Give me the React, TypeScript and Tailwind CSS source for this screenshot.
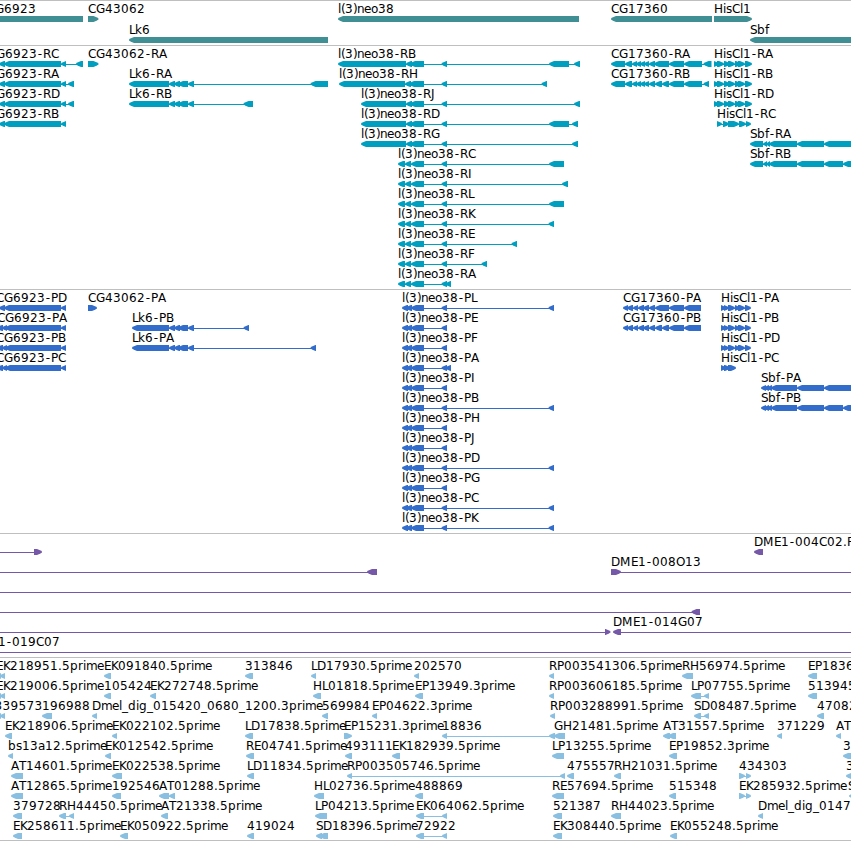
type Span = [number, number];

interface Feature {
  row: number;
  label?: string;
  // label origin, defaults to the left edge of the first block
  x?: number;
  strand?: "+" | "-";
  blocks: Span[];
  // connector line, defaults to the full extent of the blocks
  line?: Span;
}

interface Track {
  name: string;
  pitch?: number;
  heightClass: string;
  colorClass: string;
  features: Feature[];
}

// Pixel advance of each glyph in the label font
const ADVANCE: Record<string, number> = {
  A: 8, C: 8, D: 9, E: 7, F: 7, G: 9, H: 9, I: 4, J: 4, K: 7, L: 6, M: 11,
  O: 9, P: 7, R: 8, S: 7, T: 7, a: 7, b: 8, d: 8, e: 7, f: 4, g: 8, i: 3,
  k: 7, l: 3, m: 11, n: 7, o: 7, p: 8, r: 5, s: 6, "(": 4, ")": 4, ".": 4,
  "-": 6, _: 6,
};

const f = (
  row: number,
  label: string,
  blocks: Span[],
  extra: Partial<Feature> = {},
): Feature => ({ row, label, blocks, ...extra });

const genes: Feature[] = [
  f(0, "CG6923", [[-10, 83]], { x: -13 }),
  f(0, "CG43062", [[88, 98.5]], { strand: "+" }),
  f(0, "l(3)neo38", [[338, 579]]),
  f(0, "CG17360", [[611, 712]]),
  f(0, "HisCl1", [[714, 752]], { strand: "+" }),
  f(1, "Lk6", [[129, 328]]),
  f(1, "Sbf", [[750, 860]]),
];

const cg6923: Span[] = [[-1, 5], [4, 61], [61, 66]];
const lk6Mid: Span[] = [[169, 175], [174, 180], [178, 188], [188, 194]];
const neoMid: Span[] = [[406, 412], [410, 424], [441.5, 447]];
const neoShort: Span[] = [[398, 405], [405, 411], [411, 424], [441.5, 447]];
const cg17360: Span[] = [
  [611, 625], [625, 632], [632, 637], [636, 641], [640, 645], [644, 649], [649, 655],
];
const hisA: Span[] = [[714, 719], [717, 724], [724, 730], [728, 735], [735, 741], [738, 745], [745, 752]];
const sbf: Span[] = [[750, 763], [763, 767], [766, 770], [769, 797], [797, 824]];

const transcripts: Feature[] = [
  f(0, "CG6923-RC", [...cg6923, [76, 83]], { x: -12 }),
  f(1, "CG6923-RA", [...cg6923, [68, 74]], { x: -12 }),
  f(2, "CG6923-RD", [...cg6923, [68, 74]], { x: -12 }),
  f(3, "CG6923-RB", cg6923, { x: -12 }),
  f(0, "CG43062-RA", [[88, 98.5]], { strand: "+" }),
  f(1, "Lk6-RA", [[129, 169], ...lk6Mid, [310.5, 328]]),
  f(2, "Lk6-RB", [[129, 169], ...lk6Mid, [243.5, 253]]),
  f(0, "l(3)neo38-RB", [[338, 406], ...neoMid, [549, 569], [574, 580]]),
  f(1, "l(3)neo38-RH", [[339, 405], [405, 411], [409, 424], [441.5, 447], [541.5, 547]]),
  f(2, "l(3)neo38-RJ", [[361, 406], ...neoMid, [574, 580]]),
  f(3, "l(3)neo38-RD", [[361, 406], ...neoMid, [549, 569], [572, 578]]),
  f(4, "l(3)neo38-RG", [[361, 406], ...neoMid, [572, 578]]),
  f(5, "l(3)neo38-RC", [...neoShort, [549, 564]]),
  f(6, "l(3)neo38-RI", [...neoShort, [562, 568]]),
  f(7, "l(3)neo38-RL", [...neoShort, [549, 564]]),
  f(8, "l(3)neo38-RK", [...neoShort, [548.5, 554]]),
  f(9, "l(3)neo38-RE", [...neoShort, [511.5, 517]]),
  f(10, "l(3)neo38-RF", [...neoShort, [481.5, 487]]),
  f(11, "l(3)neo38-RA", [...neoShort, [445.5, 451]]),
  f(0, "CG17360-RA", [...cg17360, [654, 669], [669, 684], [684, 702], [703.5, 711.5]]),
  f(1, "CG17360-RB", [...cg17360, [655, 662], [662, 669], [669, 684], [684, 702], [703.5, 709]]),
  f(0, "HisCl1-RA", hisA, { strand: "+" }),
  f(1, "HisCl1-RB", hisA, { strand: "+" }),
  f(2, "HisCl1-RD", hisA, { strand: "+" }),
  f(3, "HisCl1-RC", [[717, 722], [723, 729], [728, 739], [739, 746], [746, 751]], { strand: "+" }),
  f(4, "Sbf-RA", [...sbf, [824, 860]]),
  f(5, "Sbf-RB", [...sbf, [824, 843], [843, 860]]),
];

const cg6923P: Span[] = [[-3, 3], [2, 7], [5, 61], [61, 66]];
const neoP: Span[] = [[402, 408], [406, 412], [411, 424], [441.5, 447]];
const neoPLong: Span[] = [...neoP, [548.5, 554]];
const cg17360P: Span[] = [[623, 628], [627, 633], [633, 638], [638, 644], [643, 649], [649, 655]];
const hisP: Span[] = [[721, 726], [724, 729], [728, 735], [735, 740], [738, 745], [745, 751]];
const sbfP: Span[] = [[761, 766], [764, 769], [767, 772], [771, 797], [797, 824]];

const proteins: Feature[] = [
  f(0, "CG6923-PD", cg6923, { x: -4 }),
  f(1, "CG6923-PA", cg6923P, { x: -3 }),
  f(2, "CG6923-PB", cg6923P, { x: -4 }),
  f(3, "CG6923-PC", cg6923P, { x: -4 }),
  f(0, "CG43062-PA", [[88, 97]], { strand: "+" }),
  f(1, "Lk6-PB", [[132, 169], ...lk6Mid, [243.5, 249]]),
  f(2, "Lk6-PA", [[132, 169], ...lk6Mid, [310.5, 316]]),
  f(0, "l(3)neo38-PL", neoPLong),
  f(1, "l(3)neo38-PE", neoP),
  f(2, "l(3)neo38-PF", neoP),
  f(3, "l(3)neo38-PA", [...neoP, [445.5, 451]]),
  f(4, "l(3)neo38-PI", neoP),
  f(5, "l(3)neo38-PB", neoPLong),
  f(6, "l(3)neo38-PH", neoP),
  f(7, "l(3)neo38-PJ", neoP),
  f(8, "l(3)neo38-PD", neoPLong),
  f(9, "l(3)neo38-PG", neoP),
  f(10, "l(3)neo38-PC", neoPLong),
  f(11, "l(3)neo38-PK", neoPLong),
  f(0, "CG17360-PA", [...cg17360P, [655, 669], [669, 684], [684, 701]]),
  f(1, "CG17360-PB", [...cg17360P, [655, 662], [662, 669], [669, 684], [684, 701]]),
  f(0, "HisCl1-PA", hisP, { strand: "+" }),
  f(1, "HisCl1-PB", hisP, { strand: "+" }),
  f(2, "HisCl1-PD", hisP, { strand: "+" }),
  f(3, "HisCl1-PC", [[721, 726], [724, 730], [728, 736]], { strand: "+" }),
  f(4, "Sbf-PA", [...sbfP, [824, 860]]),
  f(5, "Sbf-PB", [...sbfP, [824, 843], [843, 860]]),
];

const clones: Feature[] = [
  { row: 0, strand: "+", blocks: [[34, 42]], line: [-10, 40] },
  f(0, "DME1-004C02.F", [[754, 763]]),
  { row: 1, blocks: [[367, 377]], line: [-10, 377] },
  f(1, "DME1-008O13", [[611, 621]], { strand: "+", line: [611, 860] }),
  { row: 2, blocks: [], line: [-10, 860] },
  { row: 3, blocks: [[691.5, 700]], line: [-10, 700] },
  { row: 4, strand: "+", blocks: [[605, 610.5]], line: [-10, 609] },
  f(4, "DME1-014G07", [[613, 621]], { line: [614, 860] }),
  f(5, "DME1-019C07", [], { x: -29, line: [-10, 860] }),
];

const ests: Feature[] = [
  f(0, "EK218951.5prime", [[-4, 1], [0, 5]]),
  f(0, "EK091840.5prime", [[104, 111]]),
  f(0, "313846", [[245, 253]]),
  f(0, "LD17930.5prime", [[311, 316]]),
  f(0, "202570", [[414, 419]]),
  f(0, "RP003541306.5prime", [[549, 554]]),
  f(0, "RH56974.5prime", [[682, 693]]),
  f(0, "EP1836", [[808, 817]]),
  f(1, "EK219006.5prime", [[-4, 1], [0, 5]]),
  f(1, "105424", [[104, 111]]),
  f(1, "EK272748.5prime", [[150, 156]]),
  f(1, "HL01818.5prime", [[313, 321]]),
  f(1, "EP13949.3prime", [[415, 423]]),
  f(1, "RP003606185.5prime", [[549, 554]]),
  f(1, "LP07755.5prime", [[691, 701], [704, 709]]),
  f(1, "513945", [[808, 817]]),
  f(2, "339573", [[-4, 1], [0, 5]], { x: -5.5 }),
  f(2, "196988", [[42, 52]]),
  f(2, "Dmel_dig_015420_0680_1200.3prime", [[92, 97]]),
  f(2, "569984", [[322, 328]]),
  f(2, "EP04622.3prime", [[372, 377]]),
  f(2, "RP003288991.5prime", [[550, 555]]),
  f(2, "SD08487.5prime", [[694, 701], [704, 709]]),
  f(2, "47082", [[817, 824]]),
  f(3, "EK218906.5prime", [[5, 12]]),
  f(3, "EK022102.5prime", [[112, 117]]),
  f(3, "LD17838.5prime", [[245, 253]]),
  f(3, "EP15231.3prime", [[344, 352]], { strand: "+" }),
  f(3, "18836", [[442, 447], [549, 555]]),
  f(3, "GH21481.5prime", [[554, 565]]),
  f(3, "AT31557.5prime", [[663, 670], [668, 676]]),
  f(3, "371229", [[777, 782]]),
  f(3, "AT", [[836, 841]]),
  f(4, "bs13a12.5prime", [[8, 13]]),
  f(4, "EK012542.5prime", [[105, 111]]),
  f(4, "RE04741.5prime", [[246, 254]]),
  f(4, "493111", [[345, 352]]),
  f(4, "EK182939.5prime", [[392, 400]]),
  f(4, "LP13255.5prime", [[552, 564]]),
  f(4, "EP19852.3prime", [[669, 677]]),
  f(4, "3", [[843, 854]]),
  f(5, "AT14601.5prime", [[11, 23]]),
  f(5, "EK022538.5prime", [[112, 122]]),
  f(5, "LD11834.5prime", [[247, 254]]),
  f(5, "RP003505746.5prime", [[347, 352], [560, 565]]),
  f(5, "475557", [[567, 574]]),
  f(5, "RH21031.5prime", [[614, 621]]),
  f(5, "434303", [[739, 745], [746, 751]], { strand: "+" }),
  f(5, "3", [[846, 855]]),
  f(6, "AT12865.5prime", [[11, 23]]),
  f(6, "192546", [[112, 121]]),
  f(6, "AT01288.5prime", [[159, 169], [169, 175]]),
  f(6, "HL02736.5prime", [[314, 324]]),
  f(6, "488869", [[415, 423]]),
  f(6, "RE57694.5prime", [[552, 564]]),
  f(6, "515348", [[669, 676]]),
  f(6, "EK285932.5prime", [[739, 745], [746, 751]], { strand: "+" }),
  f(6, "S", [[849, 857]], { x: 848 }),
  f(7, "379728", [[13, 22]]),
  f(7, "RH44450.5prime", [[59, 66], [69, 74]]),
  f(7, "AT21338.5prime", [[161, 168]]),
  f(7, "LP04213.5prime", [[315, 327]]),
  f(7, "EK064062.5prime", [[416, 424], [442, 447]]),
  f(7, "521387", [[553, 562]]),
  f(7, "RH44023.5prime", [[611, 621]]),
  f(7, "Dmel_dig_0147", [[758, 763]]),
  f(8, "EK258611.5prime", [[13, 22]]),
  f(8, "EK050922.5prime", [[120, 128]]),
  f(8, "419024", [[247, 254]]),
  f(8, "SD18396.5prime", [[316, 322], [319, 328]]),
  f(8, "72922", [[416, 424], [442, 447]]),
  f(8, "EK308440.5prime", [[553, 562]]),
  f(8, "EK055248.5prime", [[670, 677]]),
];

const tracks: Track[] = [
  { name: "Genes", pitch: 21, heightClass: "h-[45px]", colorClass: "text-[#3f8f94]", features: genes },
  { name: "Transcripts", heightClass: "h-[244px]", colorClass: "text-[#009fc0]", features: transcripts },
  { name: "Proteins", heightClass: "h-[244px]", colorClass: "text-[#326dcc]", features: proteins },
  { name: "Clones", heightClass: "h-[124px]", colorClass: "text-[#7558a8]", features: clones },
  { name: "ESTs", heightClass: "h-[183px]", colorClass: "text-[#89bfe0]", features: ests },
];

function glyphPositions(label: string, start: number) {
  let x = start;
  return [...label]
    .map((ch) => {
      // the hyphen is narrower than its cell, so centre it
      const at = ch === "-" ? x + 0.8 : x;
      x += ADVANCE[ch] ?? 8;
      return at;
    })
    .join(" ");
}

// Bar with a slightly rounded arrowhead on the downstream end
function blockPoints([start, end]: Span, y: number, strand: "+" | "-") {
  const head = Math.min(5, end - start);
  const tip = strand === "+" ? end : start;
  const tail = strand === "+" ? start : end;
  const dir = strand === "+" ? -1 : 1;
  const neck = tip + dir * head;
  const mid = tip + dir * 2;
  return [
    [tip, y + 2.4],
    [mid, y + 1.2],
    [neck, y],
    [tail, y],
    [tail, y + 6],
    [neck, y + 6],
    [mid, y + 4.8],
    [tip, y + 3.6],
  ]
    .map((p) => p.join(","))
    .join(" ");
}

function FeatureGlyph({ feature, pitch }: { feature: Feature; pitch: number }) {
  const { row, label, blocks, strand = "-" } = feature;
  const top = row * pitch + 15;
  const first = blocks[0];
  const last = blocks[blocks.length - 1];
  const line =
    feature.line ?? (blocks.length > 1 ? ([first[0] + 1, last[1] - 1] as Span) : null);
  const labelX = feature.x ?? (first ? first[0] : 0);

  return (
    <g>
      {line && (
        <rect x={line[0]} y={top + 3} width={line[1] - line[0]} height={1} fill="currentColor" />
      )}
      {blocks.map((block, i) => (
        <polygon key={i} points={blockPoints(block, top, strand)} fill="currentColor" />
      ))}
      {label && (
        <text x={glyphPositions(label, labelX)} y={top - 3} className="fill-black">
          {label}
        </text>
      )}
    </g>
  );
}

function TrackPanel({ track }: { track: Track }) {
  return (
    <section
      aria-label={track.name}
      className={`w-full overflow-hidden border-t border-[#bfbfbf] ${track.heightClass} ${track.colorClass}`}
    >
      <svg className="block h-full w-full font-['DejaVu_Sans',sans-serif] text-[12px]">
        {track.features.map((feature, i) => (
          <FeatureGlyph key={i} feature={feature} pitch={track.pitch ?? 20} />
        ))}
      </svg>
    </section>
  );
}

export default function App() {
  return (
    <main className="flex w-[851px] flex-col overflow-hidden border-b border-[#bfbfbf] bg-white">
      {tracks.map((track) => (
        <TrackPanel key={track.name} track={track} />
      ))}
    </main>
  );
}
